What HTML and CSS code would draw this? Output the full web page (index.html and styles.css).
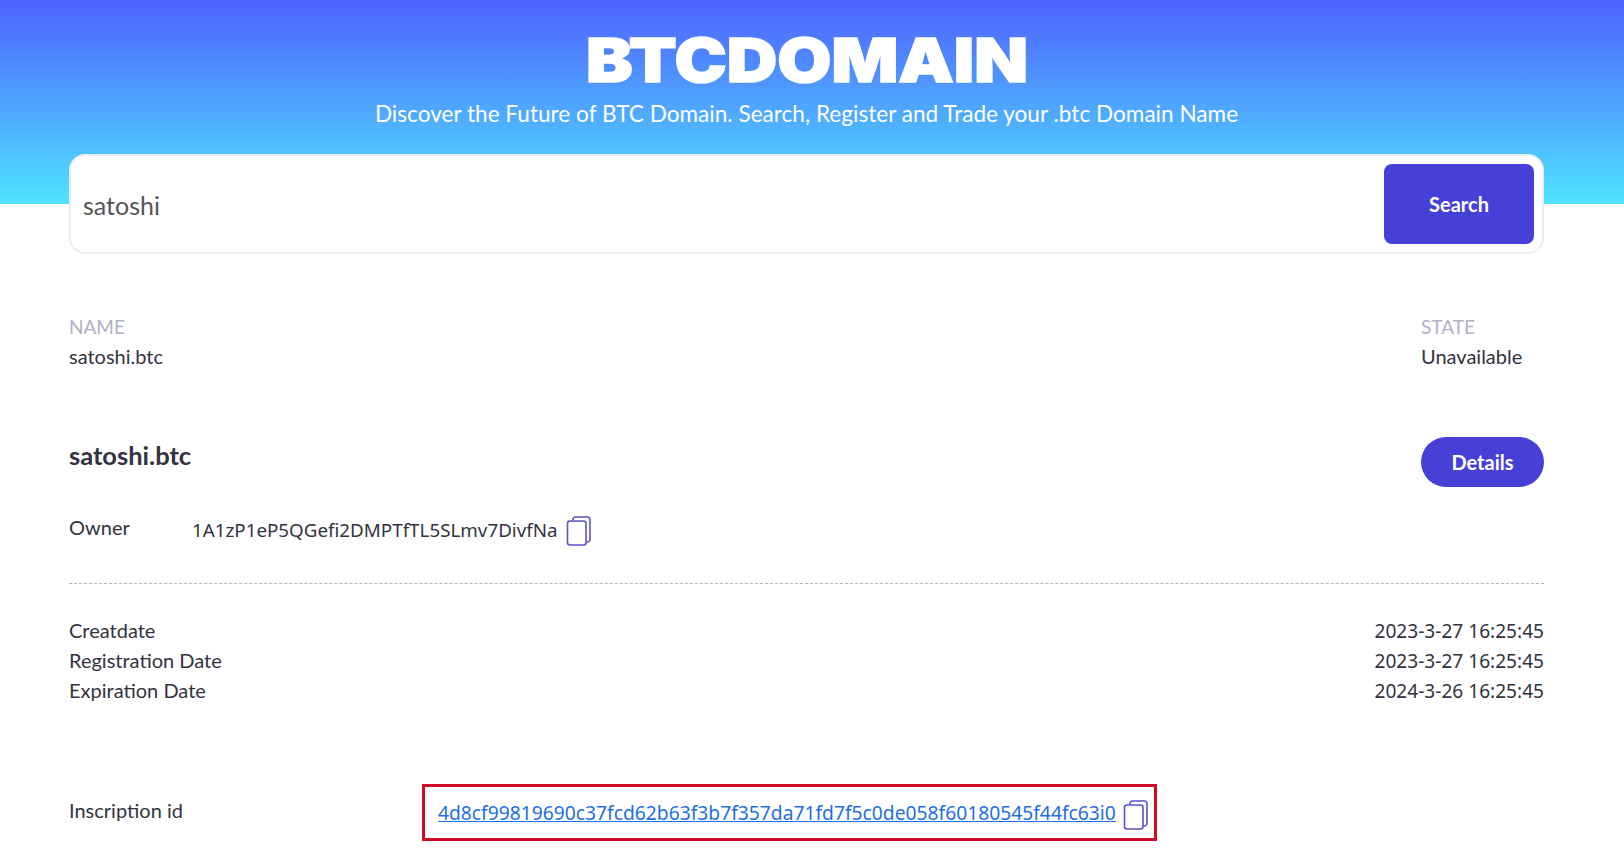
FILE: index.html
```html
<!DOCTYPE html>
<html lang="en">
<head>
    <meta charset="UTF-8">
    <title>BTC Domain</title>
    <meta name="viewport" content="width=device-width, initial-scale=1.0">
    <link rel="stylesheet" href="styles.css">
</head>
<body>
    <header class="banner">
        <svg class="logo" width="480" height="60" viewBox="0 0 480 60" role="img" aria-label="BTCDOMAIN">
            <text class="logo-text" x="19" y="52" textLength="442" lengthAdjust="spacingAndGlyphs">BTCDOMAIN</text>
        </svg>
        <p class="slogan">Discover the Future of BTC Domain. Search, Register and Trade your .btc Domain Name</p>
    </header>

    <main class="container">
        <div class="search-box">
            <span class="search-text">satoshi</span>
            <button class="search-btn">Search</button>
        </div>

        <div class="summary">
            <div>
                <div class="summary-label">NAME</div>
                <div class="summary-value">satoshi.btc</div>
            </div>
            <div class="summary-state">
                <div class="summary-label">STATE</div>
                <div class="summary-value">Unavailable</div>
            </div>
        </div>

        <div class="title-row">
            <h2>satoshi.btc</h2>
            <button class="details-btn">Details</button>
        </div>

        <div class="owner-row">
            <span class="owner-label">Owner</span>
            <span class="owner-value">1A1zP1eP5QGefi2DMPTfTL5SLmv7DivfNa</span>
            <svg class="copy-icon" viewBox="0 0 26 30" width="26" height="30"><path d="M7 4.500V3.500a2.500 2.500 0 0 1 2.500-2.500h12a2.500 2.500 0 0 1 2.500 2.500v20a2.500 2.500 0 0 1-2.500 2.500H20"/><rect x="1.500" y="5" width="18.500" height="24" rx="2.500"/></svg>
        </div>

        <div class="dates">
            <div class="date-row"><span>Creatdate</span><span class="date-value">2023-3-27 16:25:45</span></div>
            <div class="date-row"><span>Registration Date</span><span class="date-value">2023-3-27 16:25:45</span></div>
            <div class="date-row"><span>Expiration Date</span><span class="date-value">2024-3-26 16:25:45</span></div>
        </div>

        <div class="inscription-row">
            <span class="inscription-label">Inscription id</span>
            <div class="highlight">
                <a href="#">4d8cf99819690c37fcd62b63f3b7f357da71fd7f5c0de058f60180545f44fc63i0</a>
                <svg class="copy-icon" viewBox="0 0 26 30" width="26" height="30"><path d="M7 4.500V3.500a2.500 2.500 0 0 1 2.500-2.500h12a2.500 2.500 0 0 1 2.500 2.500v20a2.500 2.500 0 0 1-2.500 2.500H20"/><rect x="1.500" y="5" width="18.500" height="24" rx="2.500"/></svg>
            </div>
        </div>
    </main>
</body>
</html>
```

FILE: styles.css
```css
body {
    font-family: 'Lato', 'Noto Sans', sans-serif;
    margin: 0;
    padding: 0;
    height: 858px;
    overflow: hidden;
    background-color: #fff;
    color: #333340;
    font-size: 20px;
}

.banner {
    height: 204px;
    box-sizing: border-box;
    padding: 30px 11px 0 0;
    text-align: center;
    background: linear-gradient(180deg, #4f62ff 0%, #4fe3ff 100%);
}

.logo {
    display: block;
    margin: 0 auto;
    overflow: visible;
}

.logo-text {
    font-family: 'Inter', sans-serif;
    font-weight: 900;
    font-size: 61px;
    fill: #fff;
    stroke: #fff;
    stroke-width: 1.5px;
}

.slogan {
    margin: 9px 0 0;
    color: #fff;
    font-size: 22.600px;
    line-height: 30px;
}

.container {
    padding: 0 80px 0 69px;
    margin-top: -50px;
}

.search-box {
    display: flex;
    align-items: center;
    justify-content: space-between;
    box-sizing: border-box;
    height: 100px;
    padding: 0 8px 0 12px;
    background-color: #fff;
    border: 2px solid #ececf1;
    border-radius: 16px;
}

.search-text {
    font-size: 25px;
    color: #555;
    margin-top: 2px;
}

.search-btn {
    width: 150px;
    height: 80px;
    border: 0;
    border-radius: 8px;
    background-color: #4640d6;
    color: #fff;
    font-family: inherit;
    font-size: 20px;
    font-weight: 700;
}

.summary {
    display: flex;
    justify-content: space-between;
    margin-top: 58px;
    line-height: 30px;
}

.summary-state {
    width: 123px;
}

.summary-label {
    color: #b0b0c6;
    font-size: 19px;
}

.summary-value {
    margin-top: -1px;
}

.title-row {
    display: flex;
    justify-content: space-between;
    margin-top: 66px;
}

h2 {
    margin: -1px 0 0;
    font-size: 25.500px;
    line-height: 38px;
    font-weight: 700;
}

.details-btn {
    width: 123px;
    height: 50px;
    border: 0;
    border-radius: 25px;
    background-color: #4640d6;
    color: #fff;
    font-family: inherit;
    font-size: 20px;
    font-weight: 700;
}

.owner-row {
    display: flex;
    align-items: center;
    height: 40px;
    margin-top: 21px;
    padding-bottom: 35px;
    border-bottom: 1px dashed #b5b5b5;
}

.owner-label {
    width: 123px;
    margin-top: -2px;
}

.owner-value {
    font-family: 'Noto Sans', sans-serif;
    font-size: 18.800px;
    margin: 4px 8px 0 0;
}

.copy-icon {
    flex-shrink: 0;
    margin-top: 5px;
    fill: none;
    stroke: #5a52c8;
    stroke-width: 1.6;
}

.dates {
    margin-top: 31px;
    line-height: 30px;
}

.date-row {
    display: flex;
    justify-content: space-between;
}

.date-value {
    font-family: 'Noto Sans', sans-serif;
    font-size: 19.100px;
    position: relative;
    top: 1px;
}

.inscription-row {
    display: flex;
    align-items: center;
    margin-top: 79px;
}

.inscription-label {
    width: 353px;
    margin-top: -6px;
}

.highlight {
    display: flex;
    align-items: center;
    box-sizing: border-box;
    width: 735px;
    height: 57px;
    padding-left: 13px;
    border: 3px solid #cf0a23;
}

.highlight a {
    font-family: 'Noto Sans', sans-serif;
    color: #1f6fe0;
    font-size: 19.250px;
    margin: -1px 7px 0 0;
}
```
